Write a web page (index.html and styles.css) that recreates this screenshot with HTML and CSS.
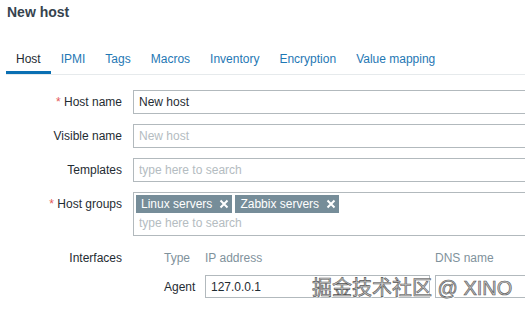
FILE: index.html
```html
<!DOCTYPE html>
<html lang="en">
<head>
<meta charset="utf-8">
<title>New host</title>
<link rel="stylesheet" href="styles.css">
</head>
<body>
<div class="page">
  <h1 class="title">New host</h1>
  <ul class="tabs">
    <li class="tab active">Host</li>
    <li class="tab">IPMI</li>
    <li class="tab">Tags</li>
    <li class="tab">Macros</li>
    <li class="tab">Inventory</li>
    <li class="tab">Encryption</li>
    <li class="tab">Value mapping</li>
  </ul>
  <form class="form">
    <label class="label"><span class="req">*</span> Host name</label>
    <div class="field"><input class="input" type="text" value="New host"></div>

    <label class="label">Visible name</label>
    <div class="field"><input class="input" type="text" placeholder="New host"></div>

    <label class="label">Templates</label>
    <div class="field"><input class="input" type="text" placeholder="type here to search"></div>

    <label class="label"><span class="req">*</span> Host groups</label>
    <div class="field">
      <div class="multiselect">
        <div class="tags">
          <span class="tag">Linux servers<svg class="x" width="10" height="10" viewBox="0 0 10 10"><path d="M1.5 1.5L8.5 8.5M8.5 1.5L1.5 8.5" stroke="#fff" stroke-width="2"/></svg></span>
          <span class="tag">Zabbix servers<svg class="x" width="10" height="10" viewBox="0 0 10 10"><path d="M1.5 1.5L8.5 8.5M8.5 1.5L1.5 8.5" stroke="#fff" stroke-width="2"/></svg></span>
        </div>
        <input class="search" type="text" placeholder="type here to search">
      </div>
    </div>

    <label class="label">Interfaces</label>
    <div class="field">
      <div class="ifaces">
        <span class="ihead">Type</span>
        <span class="ihead">IP address</span>
        <span class="ihead">DNS name</span>
        <span class="itype">Agent</span>
        <input class="input" type="text" value="127.0.0.1">
        <input class="input" type="text" value="">
      </div>
    </div>
  </form>
</div>
<div class="watermark">掘金技术社区 @ XINO</div>
</body>
</html>
```

FILE: styles.css
```css
html, body {
  margin: 0;
  padding: 0;
  background: #ffffff;
  width: 525px;
  height: 312px;
  overflow: hidden;
}

body {
  font-family: "Liberation Sans", Arial, sans-serif;
  font-size: 12px;
  color: #1f2c33;
  position: relative;
}

.page {
  width: 525px;
  overflow: hidden;
}

.title {
  margin: 0;
  padding: 4px 0 0 7px;
  font-size: 14px;
  line-height: 16px;
  font-weight: bold;
  color: #36434e;
}

.tabs {
  list-style: none;
  margin: 32px 0 0 6px;
  padding: 0;
  display: flex;
  border-bottom: 1px solid #e6eaec;
}

.tab {
  padding: 0 10px 5px;
  line-height: 14px;
  border-bottom: 3px solid transparent;
  color: #1f78b4;
  white-space: nowrap;
}

.tab.active {
  color: #1f2c33;
  border-bottom-color: #0a6fb3;
}

.form {
  margin-top: 15px;
  display: grid;
  grid-template-columns: 122px 392px;
  column-gap: 11px;
  row-gap: 10px;
}

.label {
  text-align: right;
  line-height: 24px;
  white-space: nowrap;
}

.req {
  color: #e45959;
}

.field {
  min-width: 0;
  overflow: hidden;
}

.input {
  box-sizing: border-box;
  display: block;
  width: 400px;
  height: 24px;
  margin: 0;
  padding: 0 5px;
  border: 1px solid #b2b9bd;
  border-radius: 0;
  background: #fff;
  font-family: "Liberation Sans", Arial, sans-serif;
  font-size: 12px;
  color: #1f2c33;
  outline: none;
}

.input::placeholder,
.search::placeholder {
  color: #b4bcc1;
  opacity: 1;
}

.multiselect {
  box-sizing: border-box;
  width: 400px;
  height: 44px;
  border: 1px solid #b2b9bd;
  padding: 2px;
}

.tags {
  display: flex;
  gap: 3px;
}

.tag {
  display: inline-flex;
  align-items: center;
  height: 18px;
  padding: 0 3px 0 5px;
  background: #768d99;
  color: #ffffff;
  line-height: 18px;
  white-space: nowrap;
}

.x {
  margin-left: 7px;
  display: block;
}

.search {
  box-sizing: border-box;
  display: block;
  width: 100%;
  height: 20px;
  margin: 0;
  padding: 0 3px;
  border: 0;
  background: transparent;
  font-family: "Liberation Sans", Arial, sans-serif;
  font-size: 12px;
  outline: none;
}

.ifaces {
  display: grid;
  grid-template-columns: 36px 225px 150px;
  grid-template-rows: 24px 24px;
  column-gap: 5px;
  row-gap: 5px;
  padding-left: 31px;
}

.ifaces .input {
  width: 100%;
  height: 23px;
}

.ihead {
  line-height: 24px;
  color: #7f929c;
  white-space: nowrap;
}

.itype {
  line-height: 24px;
  white-space: nowrap;
}

.watermark {
  position: absolute;
  left: 312px;
  top: 275px;
  font-family: "Liberation Sans", "Noto Sans CJK SC", sans-serif;
  font-size: 20px;
  line-height: 26px;
  color: #c4c4c4;
  -webkit-text-stroke: 0.6px #555555;
  text-shadow: 1px 1px 0 #ffffff;
  white-space: nowrap;
}
```
